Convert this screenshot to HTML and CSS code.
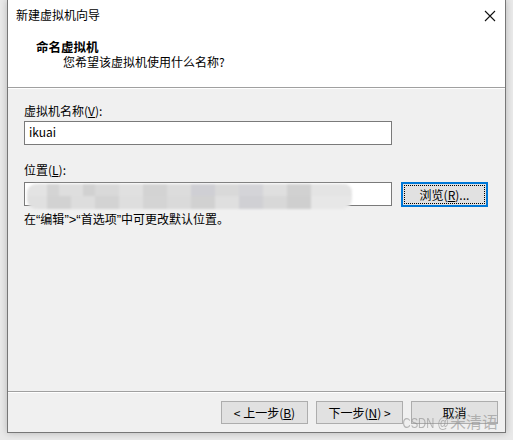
FILE: index.html
```html
<!DOCTYPE html>
<html lang="zh-CN">
<head>
<meta charset="utf-8">
<title>新建虚拟机向导</title>
<link rel="stylesheet" href="styles.css">
</head>
<body>
<div class="window">
  <div class="titlebar">
    <span class="title">新建虚拟机向导</span>
    <svg class="close" width="12" height="12" viewBox="0 0 12 12"><path d="M1 1 L11 11 M11 1 L1 11" stroke="#111" stroke-width="1.1" fill="none"/></svg>
  </div>
  <div class="header">
    <div class="heading">命名虚拟机</div>
    <div class="subtitle">您希望该虚拟机使用什么名称?</div>
  </div>
  <div class="sep"></div>
  <div class="content">
    <div class="label">虚拟机名称(<u>V</u>):</div>
    <div class="field name-field">ikuai</div>
    <div class="label label2">位置(<u>L</u>):</div>
    <div class="row">
      <div class="field loc-field"><div class="mosaic"></div></div>
      <div class="btn browse"><span class="focus">浏览(<u>R</u>)...</span></div>
    </div>
    <div class="hint">在<span class="q">“</span>编辑<span class="q">”&gt;“</span>首选项<span class="q">”</span>中可更改默认位置。</div>
  </div>
  <div class="sep"></div>
  <div class="footer">
    <div class="btn">&lt; 上一步(<u>B</u>)</div>
    <div class="btn">下一步(<u>N</u>) &gt;</div>
    <div class="btn">取消</div>
  </div>
  <div class="watermark"><span class="wm-latin">CSDN @</span>宋清语</div>
</div>
</body>
</html>
```
FILE: styles.css
```css
html, body {
  margin: 0;
  padding: 0;
}
body {
  width: 513px;
  height: 440px;
  background: #e9e9e9;
  font-family: "Noto Sans CJK SC", "Microsoft YaHei", sans-serif;
  font-size: 12px;
  color: #000;
  overflow: hidden;
}
.window {
  position: relative;
  box-sizing: border-box;
  margin-left: 7px;
  width: 499px;
  height: 433px;
  background: #f0f0f0;
  border: 1px solid #777;
  border-top: none;
  display: flex;
  flex-direction: column;
  box-shadow: 0 0 7px rgba(0, 0, 0, 0.22);
}
.titlebar {
  height: 30px;
  background: #fff;
  display: flex;
  align-items: center;
  justify-content: space-between;
  padding: 0 9px 0 8px;
}
.title {
  line-height: 16px;
}
.close {
  display: block;
  margin-top: 1px;
}
.header {
  height: 57px;
  background: #fff;
  box-sizing: border-box;
  padding-top: 9px;
}
.heading {
  font-weight: bold;
  font-size: 12.5px;
  line-height: 16px;
  padding-left: 28px;
}
.subtitle {
  line-height: 16px;
  padding-left: 55px;
  margin-top: -1px;
}
.sep {
  height: 1px;
  background: #a0a0a0;
  border-bottom: 1px solid #fff;
}
.content {
  flex: 1;
  padding: 14px 0 0 16px;
}
.label {
  line-height: 16px;
  height: 16px;
}
.label2 {
  margin-top: 17px;
}
.field {
  box-sizing: border-box;
  width: 368px;
  height: 24px;
  background: #fff;
  border: 1px solid #7a7a7a;
  line-height: 20px;
  padding-left: 4px;
}
.name-field {
  margin-top: 2px;
}
.row {
  display: flex;
  gap: 9px;
  margin-top: 4px;
}
.loc-field {
  position: relative;
  padding-left: 2px;
  padding-top: 1px;
}
.mosaic {
  width: 325px;
  height: 25px;
  border-radius: 9px 8px 10px 9px;
  filter: blur(1px);
  background:
    linear-gradient(90deg, #e3e3e3 0 20px, #d4d4d4 20px 32px, #dedede 32px 56px, #d1d1d1 56px 68px, #d9d9d9 68px 92px, #e0e0e0 92px 116px, #d3d3d3 116px 140px, #dcdcdc 140px 164px, #cfcfd4 164px 188px, #d9d9d9 188px 212px, #d4d4d8 212px 236px, #dfdfdf 236px 260px, #d1d1d1 260px 284px, #e4e4e4 284px 325px) top / 100% 12px no-repeat,
    linear-gradient(90deg, #e0e0e0 0 20px, #d2d2d2 20px 44px, #dddddd 44px 68px, #d3d3d3 68px 92px, #dedede 92px 116px, #d4d4d4 116px 140px, #dadada 140px 164px, #d1d1d1 164px 188px, #dfdfdf 188px 212px, #d0d0d4 212px 236px, #d8d8d8 236px 260px, #cfcfcf 260px 284px, #e7e7e7 284px 325px) bottom / 100% 13px no-repeat;
}
.btn {
  box-sizing: border-box;
  width: 87px;
  height: 23px;
  background: #e1e1e1;
  border: 1px solid #adadad;
  display: flex;
  align-items: center;
  justify-content: center;
  line-height: 16px;
}
.browse {
  height: 25px;
  border: 2px solid #0078d7;
  padding: 1px;
}
.focus {
  box-sizing: border-box;
  width: 100%;
  height: 100%;
  border: 1px dotted #000;
  display: flex;
  align-items: center;
  justify-content: center;
}
.hint {
  margin-top: 4px;
  line-height: 16px;
}
.q {
  font-family: "Liberation Sans", sans-serif;
  font-size: 13px;
}
u {
  text-decoration: underline;
  text-underline-offset: 1px;
}
.footer {
  height: 39px;
  box-sizing: border-box;
  display: flex;
  justify-content: flex-end;
  gap: 8px;
  padding: 8px 7px 0 0;
}
.watermark {
  position: absolute;
  right: 7px;
  bottom: -1px;
  font-family: "Noto Sans CJK SC", sans-serif;
  font-size: 16px;
  line-height: 20px;
  color: rgba(140, 140, 140, 0.6);
  white-space: nowrap;
}
.wm-latin {
  display: inline-block;
  font-family: "Liberation Sans", sans-serif;
  font-size: 14px;
  transform: scaleX(0.8);
  transform-origin: right center;
  margin-right: 1px;
}
```
